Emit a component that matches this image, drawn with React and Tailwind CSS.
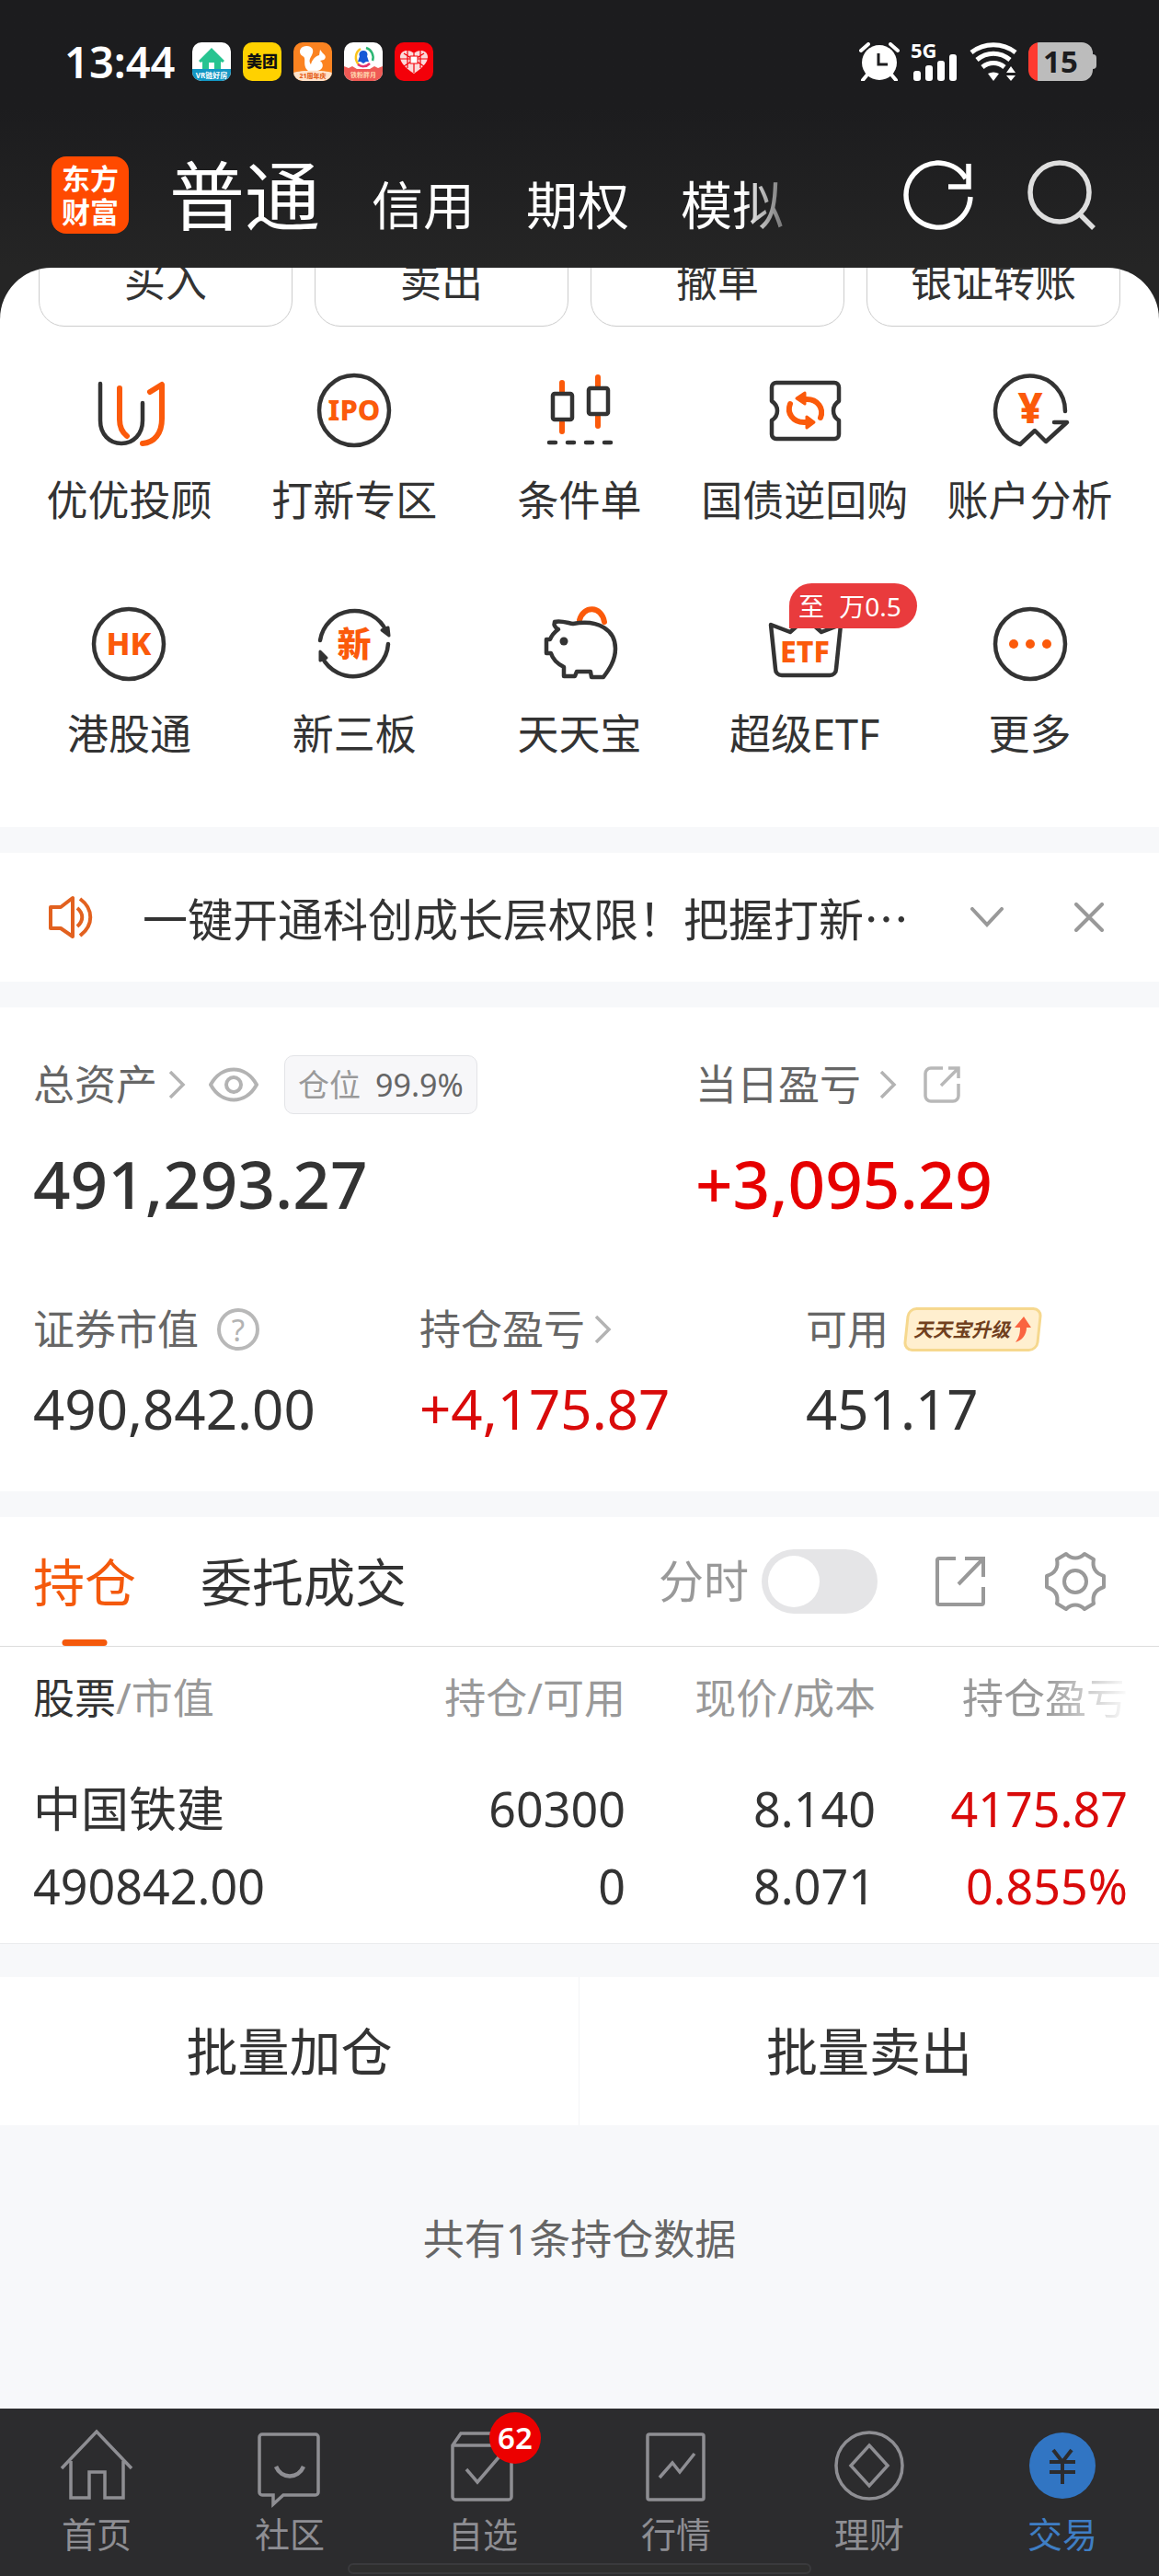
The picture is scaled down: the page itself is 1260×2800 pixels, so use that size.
import { useState } from "react";

const ORANGE = "#fb5a0b";
const DARK = "#333333";

/** 快捷入口图标的统一画布 */
const Glyph = ({ children }) => (
  <svg
    viewBox="0 0 80 80"
    className="size-20 overflow-visible"
    fill="none"
    stroke={DARK}
    strokeWidth="4.5"
    strokeLinecap="round"
    strokeLinejoin="round"
    aria-hidden="true"
  >
    {children}
  </svg>
);

const GlyphText = ({ children, size, y }) => (
  <text
    x="40"
    y={y}
    fontSize={size}
    fontWeight="800"
    fill={ORANGE}
    stroke="none"
    textAnchor="middle"
  >
    {children}
  </text>
);

const AdvisorIcon = () => (
  <Glyph>
    <path d="M9 11v40c0 15 10 25 23 25s23-10 23-25V32" />
    <g stroke={ORANGE} strokeWidth="6">
      <path d="M30 16v34c0 8 3 14 8 18" />
      <path d="M63 20l13-8v37c0 16-8 26-21 27" />
    </g>
  </Glyph>
);

const IpoIcon = () => (
  <Glyph>
    <circle cx="40" cy="40" r="38" />
    <GlyphText size="31" y="51">IPO</GlyphText>
  </Glyph>
);

const ConditionIcon = () => (
  <Glyph>
    <g stroke={ORANGE} strokeWidth="6">
      <path d="M21 10v10M21 53v10M60 4v10M60 47v10" />
    </g>
    <rect x="11" y="22" width="21" height="28" rx="2" />
    <rect x="50" y="16" width="21" height="28" rx="2" />
    <path d="M7 75h7M27 75h7M47 75h7M67 75h7" />
  </Glyph>
);

const RepoIcon = () => (
  <Glyph>
    <path d="M9 10h63a5 5 0 0 1 5 5v15c-8 5-8 16 0 21v15a5 5 0 0 1-5 5H9a5 5 0 0 1-5-5V51c8-5 8-16 0-21V15a5 5 0 0 1 5-5z" />
    <g stroke={ORANGE} strokeWidth="6">
      <path d="M38 28h4c12 0 19 10 15 20" />
      <path d="M24 33c-4 10 3 20 15 20h5" />
      <path d="M31 27l9-6v12zM50 53l-8-6v12z" fill={ORANGE} strokeWidth="3" />
    </g>
  </Glyph>
);

const AnalysisIcon = () => (
  <Glyph>
    <path d="M78 41A38 38 0 1 0 29 77L45 62l12 12L80 53H66" />
    <GlyphText size="47" y="54">¥</GlyphText>
  </Glyph>
);

const HkIcon = () => (
  <Glyph>
    <circle cx="40" cy="40" r="38" />
    <GlyphText size="34" y="52">HK</GlyphText>
  </Glyph>
);

const NewBoardIcon = () => (
  <Glyph>
    <path d="M3 36A38 38 0 0 1 75 26M77 40A38 38 0 0 1 5 54" />
    <path d="M70 25l7-3 1 9zM10 55l-7 3V48z" fill={DARK} strokeWidth="3" />
    <GlyphText size="37" y="54">新</GlyphText>
  </Glyph>
);

const PiggyIcon = () => (
  <Glyph>
    <path d="M40 14c4-16 24-16 27 2" stroke={ORANGE} strokeWidth="6" />
    <path d="M13 16c6-2 14 1 20 2 28-5 46 7 46 27 0 13-7 23-13 31H53l-1-6H37l-2 5H23V65C15 61 11 57 9 50H4V35h4c2-5 5-8 9-11-4-2-5-5-4-8z" />
    <circle cx="23" cy="37" r="4.500" fill={DARK} stroke="none" />
  </Glyph>
);

const EtfIcon = () => (
  <Glyph>
    <path d="M3 19l21 8 17-15 17 15 21-8-5 48c0 4-3 7-7 7H15c-4 0-7-3-7-7z" />
    <GlyphText size="32" y="60">ETF</GlyphText>
  </Glyph>
);

const MoreIcon = () => (
  <Glyph>
    <circle cx="40" cy="40" r="38" />
    <g fill={ORANGE} stroke="none">
      <circle cx="22" cy="40" r="5" />
      <circle cx="40" cy="40" r="5" />
      <circle cx="58" cy="40" r="5" />
    </g>
  </Glyph>
);

const quickActions = ["买入", "卖出", "撤单", "银证转账"];

const entries = [
  { label: "优优投顾", Icon: AdvisorIcon },
  { label: "打新专区", Icon: IpoIcon },
  { label: "条件单", Icon: ConditionIcon },
  { label: "国债逆回购", Icon: RepoIcon },
  { label: "账户分析", Icon: AnalysisIcon },
  { label: "港股通", Icon: HkIcon },
  { label: "新三板", Icon: NewBoardIcon },
  { label: "天天宝", Icon: PiggyIcon },
  { label: "超级ETF", Icon: EtfIcon, tag: true },
  { label: "更多", Icon: MoreIcon },
];

const holdings = [
  {
    name: "中国铁建",
    value: "490842.00",
    amount: "60300",
    usable: "0",
    price: "8.140",
    cost: "8.071",
    profit: "4175.87",
    rate: "0.855%",
  },
];

/** 小图标 */
const ChevronRight = () => (
  <svg viewBox="0 0 20 30" className="h-[30px] w-5" fill="none" stroke="#b3b3b3" strokeWidth="3.500" aria-hidden="true">
    <path d="M2 1l14 14L2 29" />
  </svg>
);

const ShareIcon = () => (
  <svg viewBox="0 0 40 40" className="size-10" fill="none" stroke="#b8b8b8" strokeWidth="3.500" aria-hidden="true">
    <path d="M21 2H8a6 6 0 0 0-6 6v24a6 6 0 0 0 6 6h24a6 6 0 0 0 6-6V19" />
    <path d="M27 2h11v11M38 2L19 21" />
  </svg>
);

/** 系统状态栏 */
const AppBadges = () => (
  <div className="flex gap-[13px]" aria-hidden="true">
    <svg viewBox="0 0 42 42" className="size-[42px] rounded-[10px] bg-white">
      <path d="M7 20L21 6l14 14-2 2-2-1v9h-7v-8h-6v8h-7v-9l-2 1z" fill="#27c491" />
      <path d="M0 29h42v13H0z" fill="#1297c4" />
      <text x="21" y="39" fontSize="8" fontWeight="700" fill="#fff" textAnchor="middle">VR链好房</text>
    </svg>
    <svg viewBox="0 0 42 42" className="size-[42px] rounded-[10px] bg-[#ffd100]">
      <text x="21" y="27" fontSize="17" fontWeight="900" fill="#111" textAnchor="middle">美团</text>
    </svg>
    <svg viewBox="0 0 42 42" className="size-[42px] rounded-[10px] bg-[#fb8321]">
      <path d="M10 5c8-3 14 2 10 9-3 5-3 7-1 10 1-5 5-9 9-10l1-6 3 4c3 2 4 5 1 7l-4 1c5 4 3 10-3 11H16C9 25 15 17 10 15c-4-2-4-8 0-10z" fill="#fff" />
      <path d="M0 33c8-3 34-3 42 0v9H0z" fill="#ffe3cb" />
      <text x="21" y="39" fontSize="7" fontWeight="800" fill="#e5601a" textAnchor="middle">21周年庆</text>
    </svg>
    <svg viewBox="0 0 42 42" className="size-[42px] rounded-[10px] bg-white">
      <path d="M16 24A11 11 0 0 1 18 7" fill="none" stroke="#fbc31b" strokeWidth="2.500" />
      <path d="M24 6a11 11 0 0 1 7 14" fill="none" stroke="#2bb673" strokeWidth="2.500" />
      <path d="M28 23c-4 4-9 4-13 1" fill="none" stroke="#e6346f" strokeWidth="2.500" />
      <path d="M21 9c5 0 5 5 4 6l2 6h-3l-3 2-3-2h-3l2-6c-1-1-1-6 4-6z" fill="#1557d6" />
      <path d="M0 26l5 2 4-2 5 3h14l5-3 4 2 5-2v16H0z" fill="#f05a55" />
      <text x="21" y="38" fontSize="7" fontWeight="700" fill="#ffd9b0" textAnchor="middle">铁粉胖月</text>
    </svg>
    <svg viewBox="0 0 42 42" className="size-[42px] rounded-[10px] bg-[#f40009]">
      <path d="M21 34C12 28 6 22 6 16c0-8 10-9 15-4 5-5 15-4 15 4 0 6-6 12-15 18z" fill="#fbdada" />
      <path d="M10 12l22 14M32 12L10 26M21 12v21M6 18h30M14 9v19M28 9v19" stroke="#f40009" strokeWidth="1.200" />
      <rect x="17" y="15" width="8" height="8" fill="#fff" stroke="#f40009" />
    </svg>
  </div>
);

const StatusBar = () => (
  <div className="flex items-center justify-between pt-[39px] pr-[68px] pl-[70px]">
    <div className="flex items-center gap-[18px]">
      <span className="text-[47px] leading-14 font-semibold text-white">13:44</span>
      <AppBadges />
    </div>
    <div className="flex items-center gap-3 text-white" aria-label="系统状态">
      <svg viewBox="0 0 44 42" className="h-[42px] w-11">
        <path d="M2 9l8-7M42 9l-8-7M9 35l-5 6M35 35l5 6" stroke="#fff" strokeWidth="4" strokeLinecap="round" />
        <circle cx="22" cy="22" r="19" fill="#fff" />
        <path d="M21 12v12h10" fill="none" stroke="#1c1c1e" strokeWidth="3" />
      </svg>
      <svg viewBox="0 0 52 42" className="h-[42px] w-[52px] overflow-visible">
        <text x="0" y="17" fontSize="22" fontWeight="700" fill="#fff">5G</text>
        <g fill="#fff">
          <rect x="3" y="31" width="8" height="11" rx="3" />
          <rect x="16" y="25" width="8" height="17" rx="3" />
          <rect x="29" y="20" width="8" height="22" rx="3" />
          <rect x="42" y="13" width="8" height="29" rx="3" />
        </g>
      </svg>
      <svg viewBox="0 0 52 42" className="h-[42px] w-[52px]" fill="none" stroke="#fff" strokeWidth="5">
        <path d="M2 11c14-11 34-11 48 0M8 19c11-9 25-9 36 0M14 27c7-6 17-6 24 0" />
        <path d="M20 34c4-2 8-2 12 0l-6 8zM45 26l5 7H40zM45 42l5-6H40z" fill="#fff" stroke="none" />
      </svg>
      <div className="flex items-center">
        <div className="flex h-[42px] w-[70px] items-center justify-center rounded-xl bg-linear-to-r from-[#ff3b30] from-15% to-[#bcbcbc] to-15% text-[33px] leading-10 font-bold text-[#1c1c1e]">
          15
        </div>
        <span className="h-4 w-1 rounded-r bg-[#bcbcbc]" />
      </div>
    </div>
  </div>
);

const Header = () => (
  <header className="bg-linear-to-b from-[#1c1c1e] from-40% to-[#252525] pb-[37px]">
    <StatusBar />
    <div className="flex items-center pt-[75px] pr-[68px] pl-14">
      <h1 className="flex size-[84px] shrink-0 items-center justify-center rounded-2xl bg-[#ff4a00] text-center text-[31px] leading-9 font-bold text-white">
        东方
        <br />
        财富
      </h1>
      <nav className="ml-11 flex h-[84px] flex-1 items-baseline gap-14 text-[56px] leading-[84px] text-white [mask-image:linear-gradient(to_right,black_78%,transparent_87%)]">
        <a href="#normal" className="text-[82px]">普通</a>
        <a href="#credit">信用</a>
        <a href="#option">期权</a>
        <a href="#mock">模拟</a>
      </nav>
      <div className="flex gap-[58px]">
        <button type="button" aria-label="刷新">
          <svg viewBox="0 0 76 76" className="size-[76px]" fill="none" stroke="#fff" strokeWidth="5.500">
            <path d="M73 40A35 35 0 1 1 68 20" />
            <path d="M71 4v25H49" />
          </svg>
        </button>
        <button type="button" aria-label="搜索">
          <svg viewBox="0 0 76 76" className="size-[76px]" fill="none" stroke="#dedede" strokeWidth="5.500">
            <circle cx="36" cy="35" r="32" />
            <path d="M58 59l15 15" />
          </svg>
        </button>
      </div>
    </div>
  </header>
);

const QuickPanel = () => (
  <div className="bg-[#252525]">
    <section className="overflow-hidden rounded-t-[56px] bg-white pb-[71px]">
      {/* 交易按钮随页面上滑, 顶部被标题栏遮住 */}
      <div className="-mt-[36px] grid grid-cols-4 gap-6 px-[42px]">
        {quickActions.map((text) => (
          <button key={text} type="button" className="h-[100px] rounded-[28px] border border-[#cccccc] text-[45px] leading-none text-[#333]">
            {text}
          </button>
        ))}
      </div>
      <div className="mt-[51px] grid grid-cols-5 gap-y-[86px] px-[18px]">
        {entries.map(({ label, Icon, tag }) => (
          <a key={label} href={`#${label}`} className="relative flex flex-col items-center gap-7">
            <Icon />
            <span className="text-[45px] leading-[60px] whitespace-nowrap text-[#333]">{label}</span>
            {tag && (
              <span className="absolute -top-[26px] left-[106px] flex h-[49px] w-[139px] items-center justify-center gap-4 rounded-full rounded-bl-none bg-[#e93b3d] pr-2 text-[28px] text-white">
                <span>至</span>
                <span>万0.5</span>
              </span>
            )}
          </a>
        ))}
      </div>
    </section>
  </div>
);

const Notice = ({ onClose }) => (
  <section className="flex h-[140px] items-center bg-white pr-[60px] pl-[53px]">
    <svg viewBox="0 0 48 48" className="size-12 shrink-0" fill="none" stroke="#e2611f" strokeWidth="4" strokeLinejoin="round" aria-hidden="true">
      <path d="M2 13h11L26 3v42L13 36H2z" />
      <path d="M31 14c7 6 7 14 0 20M34 4c15 11 15 29 0 40" />
    </svg>
    <p className="ml-[54px] flex-1 truncate font-['Noto_Sans_CJK_SC',sans-serif] text-[49px] leading-[70px] text-[#333]">
      一键开通科创成长层权限！把握打新…
    </p>
    <button type="button" aria-label="展开" className="mr-[77px]">
      <svg viewBox="0 0 36 22" className="h-[22px] w-9" fill="none" stroke="#999" strokeWidth="4" strokeLinecap="round">
        <path d="M2 2l16 17L34 2" />
      </svg>
    </button>
    <button type="button" aria-label="关闭" onClick={onClose}>
      <svg viewBox="0 0 32 32" className="size-8" fill="none" stroke="#999" strokeWidth="4" strokeLinecap="round">
        <path d="M2 2l28 28M30 2L2 30" />
      </svg>
    </button>
  </section>
);

const Assets = () => (
  <section className="bg-white pt-[52px] pb-12 text-[45px] leading-[64px] text-[#666]">
    <div className="grid grid-cols-[4fr_3fr]">
      <div className="pl-9">
        <div className="flex items-center">
          总资产
          <span className="ml-3"><ChevronRight /></span>
          <button type="button" aria-label="隐藏金额" className="ml-6">
            <svg viewBox="0 0 54 38" className="h-[38px] w-[54px]" fill="none" stroke="#b3b3b3" strokeWidth="4">
              <path d="M2 19C14-3 40-3 52 19 40 41 14 41 2 19z" />
              <circle cx="27" cy="19" r="8" />
            </svg>
          </button>
          <span className="ml-7 flex h-16 items-center gap-4 rounded-[10px] border border-[#e3e4e7] bg-[#f7f7f9] px-[14px] text-[34px]">
            <span className="text-[#999]">仓位</span>
            <span>99.9%</span>
          </span>
        </div>
        <p className="mt-[34px] text-[71px] leading-[84px] font-medium text-[#333]">491,293.27</p>
      </div>
      <div className="pl-9">
        <div className="flex items-center">
          当日盈亏
          <span className="ml-5"><ChevronRight /></span>
          <button type="button" aria-label="分享当日盈亏" className="ml-7"><ShareIcon /></button>
        </div>
        <p className="mt-[34px] text-[71px] leading-[84px] font-medium text-[#e60000]">+3,095.29</p>
      </div>
    </div>
    <div className="mt-[84px] grid grid-cols-3">
      <div className="pl-9">
        <div className="flex items-center">
          证券市值
          <button type="button" aria-label="证券市值说明" className="ml-5 flex size-[46px] items-center justify-center rounded-full border-4 border-[#b8b8b8] text-[33px] leading-none text-[#b3b3b3]">
            ?
          </button>
        </div>
        <p className="mt-3 text-[60px] leading-[84px] text-[#333]">490,842.00</p>
      </div>
      <div className="pl-9">
        <div className="flex items-center">
          持仓盈亏
          <span className="ml-[10px]"><ChevronRight /></span>
        </div>
        <p className="mt-3 text-[60px] leading-[84px] text-[#d90a0a]">+4,175.87</p>
      </div>
      <div className="pl-9">
        <div className="flex items-center">
          可用
          <a
            href="#upgrade"
            className="relative ml-[18px] flex h-12 items-center gap-1 px-[9px] text-[21px] font-bold text-[#70401f] italic before:absolute before:inset-0 before:-skew-x-6 before:rounded-[10px] before:border-3 before:border-[#f6d88e] before:bg-[#ffefcf]"
          >
            <span className="relative">天天宝升级</span>
            <svg viewBox="0 0 20 30" className="relative h-[30px] w-5" aria-hidden="true">
              <path d="M11 1l8 12h-5c0 8-5 14-12 16 4-5 5-10 5-16H1z" fill="#fa6440" />
            </svg>
          </a>
        </div>
        <p className="mt-3 text-[60px] leading-[84px] text-[#333]">451.17</p>
      </div>
    </div>
  </section>
);

const Holdings = () => {
  const [chart, setChart] = useState(false);

  return (
    <section className="bg-white">
      <div className="flex h-[141px] items-center border-b border-[#dddddd] pr-[58px] pl-9 text-[56px]">
        <a
          href="#holdings"
          className="relative flex h-full items-center text-[#f4590c] after:absolute after:bottom-0 after:left-1/2 after:h-[7px] after:w-[49px] after:-translate-x-1/2 after:rounded-full after:bg-[#f4590c]"
        >
          持仓
        </a>
        <a href="#orders" className="ml-[70px] flex-1 text-[#333]">委托成交</a>
        <label htmlFor="chart" className="text-[49px] text-[#999]">分时</label>
        <input
          id="chart"
          type="checkbox"
          role="switch"
          checked={chart}
          onChange={(e) => setChart(e.target.checked)}
          className="ml-[14px] h-[70px] w-[126px] appearance-none rounded-full bg-[#e5e5e7] p-[7px] before:block before:size-14 before:rounded-full before:bg-white checked:bg-[#f4590c] checked:before:ml-auto"
        />
        <button type="button" aria-label="分享持仓" className="ml-[62px]">
          <svg viewBox="0 0 56 56" className="size-14" fill="none" stroke="#999" strokeWidth="4">
            <path d="M23 3H5a2 2 0 0 0-2 2v46a2 2 0 0 0 2 2h46a2 2 0 0 0 2-2V34" />
            <path d="M33 3h20v20M53 3L26 31" />
          </svg>
        </button>
        <button type="button" aria-label="设置" className="ml-[64px]">
          <svg viewBox="0 0 66 66" className="size-[66px]" fill="none" stroke="#999" strokeWidth="4" strokeLinejoin="round">
            <path d="M23 3c6 6 14 6 20 0l10 6c-2 9 2 15 11 18v12c-9 3-13 9-11 18l-10 6c-6-6-14-6-20 0l-10-6c2-9-2-15-11-18V27c9-3 13-9 11-18z" />
            <circle cx="33" cy="33" r="12" />
          </svg>
        </button>
      </div>

      <table className="w-full table-fixed border-b border-[#ebecee] text-right text-[52px] leading-[84px] text-[#333]">
        <thead>
          <tr className="text-[45px] leading-14 text-[#999] *:py-7 *:font-normal">
            <th scope="col" className="pl-9 text-left"><span className="text-[#333]">股票</span>/市值</th>
            <th scope="col" className="w-[272px]">持仓/可用</th>
            <th scope="col" className="w-[272px]">现价/成本</th>
            <th scope="col" className="w-[308px] pr-[34px] [mask-image:linear-gradient(to_right,black_60%,transparent_90%)]">持仓盈亏</th>
          </tr>
        </thead>
        <tbody>
          {holdings.map((h) => (
            <tr key={h.name} className="*:pt-[22px] *:pb-5">
              <td className="pl-9 text-left">{h.name}<br />{h.value}</td>
              <td>{h.amount}<br />{h.usable}</td>
              <td>{h.price}<br />{h.cost}</td>
              <td className="pr-[34px] text-[#d90a0a]">{h.profit}<br />{h.rate}</td>
            </tr>
          ))}
        </tbody>
      </table>
    </section>
  );
};

/** 底部导航图标 */
const tabs = [
  {
    label: "首页",
    icon: <path d="M2 45L40 5l38 40M12 37v40h20V49h17v28h20V37" />,
  },
  {
    label: "社区",
    icon: (
      <>
        <path d="M10 8h58a3 3 0 0 1 3 3v60a3 3 0 0 1-3 3H33L22 84V74H10a3 3 0 0 1-3-3V11a3 3 0 0 1 3-3z" />
        <path d="M25 43c6 14 24 14 30 0" strokeWidth="4.500" />
      </>
    ),
  },
  {
    label: "自选",
    badge: "62",
    icon: <path d="M7 20L16 7h46l9 13v56a3 3 0 0 1-3 3H10a3 3 0 0 1-3-3zM7 20h64M22 46l12 14 24-28" />,
  },
  {
    label: "行情",
    icon: (
      <>
        <rect x="9" y="8" width="61" height="71" rx="2" />
        <path d="M22 55l14-16 8 10 16-20" />
      </>
    ),
  },
  {
    label: "理财",
    icon: (
      <>
        <circle cx="40" cy="42" r="36" />
        <path d="M40 20l20 22-20 22-20-22z" />
      </>
    ),
  },
  {
    label: "交易",
    active: true,
    icon: (
      <>
        <circle cx="40" cy="42" r="36" fill="#3175c3" stroke="none" />
        <path d="M30 25l10 13 10-13M40 37v25M26 38h28M26 49h28" stroke="#2c2c2e" strokeWidth="4" />
      </>
    ),
  },
];

const TabBar = () => (
  <nav className="bg-[#2c2c2e] pt-5">
    <div className="grid grid-cols-6">
      {tabs.map(({ label, icon, badge, active }) => (
        <a
          key={label}
          href={`#${label}`}
          className={
            active
              ? "relative flex flex-col items-center text-[#3f7ec4]"
              : "relative flex flex-col items-center text-[#8e8e93]"
          }
        >
          <svg viewBox="0 0 80 88" className="h-[88px] w-20" fill="none" stroke="currentColor" strokeWidth="3.500" aria-hidden="true">
            {icon}
          </svg>
          <span className="mt-1 text-[38px] leading-12">{label}</span>
          {badge && (
            <span className="absolute -top-4 left-[112px] flex size-14 items-center justify-center rounded-full bg-[#ec0000] text-[33px] font-semibold text-white">
              {badge}
            </span>
          )}
        </a>
      ))}
    </div>
    <div className="mx-auto mt-2 mb-0.5 h-3 w-2/5 rounded-full border-2 border-[#3a3a3d] bg-[#2e2e2e]" />
  </nav>
);

export default function App() {
  const [showNotice, setShowNotice] = useState(true);

  return (
    <div lang="zh-CN" className="flex min-h-screen flex-col bg-[#f7f8fa] font-['Noto_Sans','Noto_Sans_CJK_SC',sans-serif]">
      <Header />
      <QuickPanel />
      <main className="flex flex-1 flex-col pt-7">
        {showNotice && (
          <div className="mb-7">
            <Notice onClose={() => setShowNotice(false)} />
          </div>
        )}
        <Assets />
        <div className="mt-7">
          <Holdings />
        </div>
        <div className="mt-9 grid grid-cols-2 bg-white text-[56px] leading-[161px] text-[#333]">
          <button type="button" className="border-r border-[#f3f4f6]">批量加仓</button>
          <button type="button">批量卖出</button>
        </div>
        <p className="mt-24 text-center text-[45px] leading-14 text-[#666]">共有1条持仓数据</p>
      </main>
      <TabBar />
    </div>
  );
}
